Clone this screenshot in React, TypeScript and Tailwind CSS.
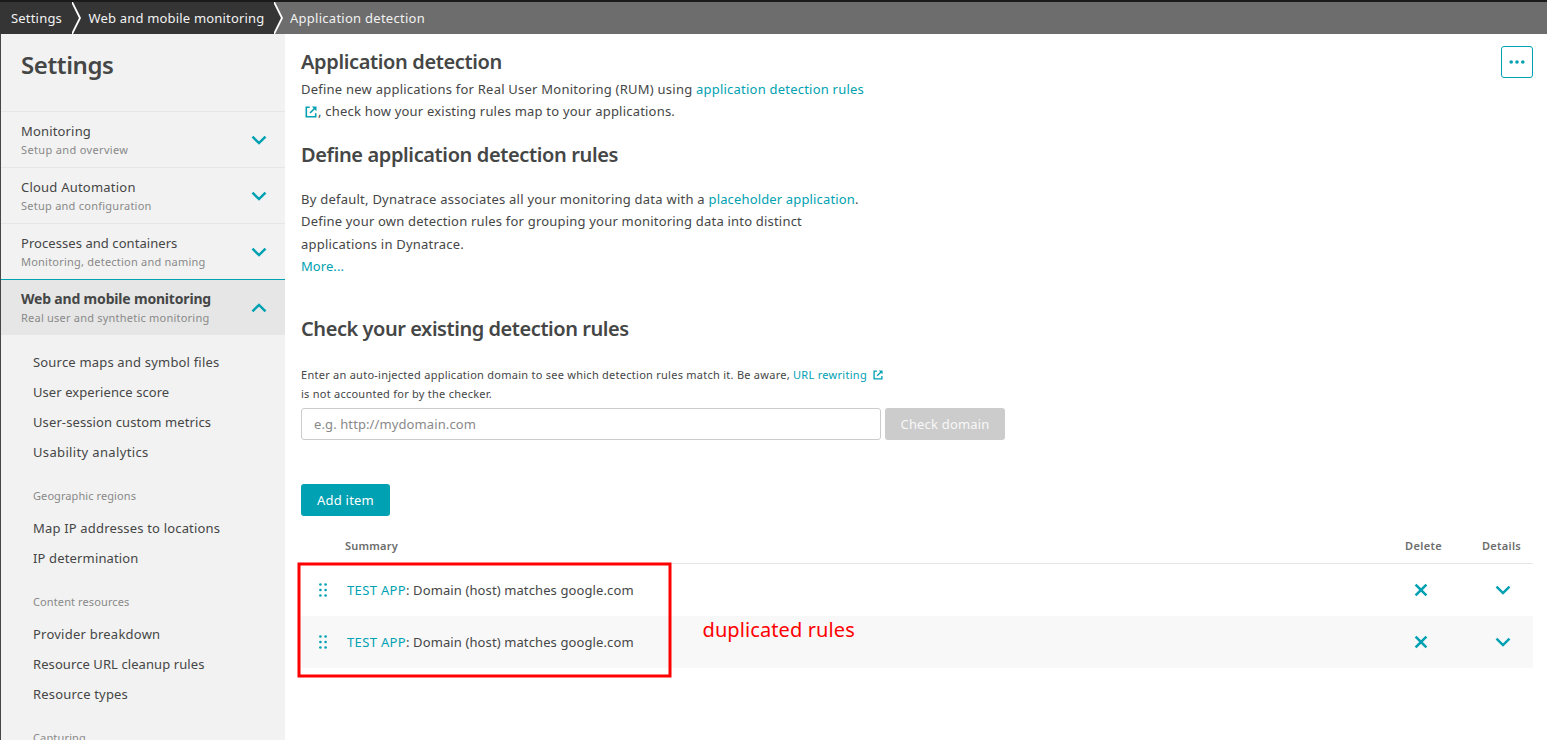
function Chevron({ up = false }: { up?: boolean }) {
  return (
    <svg width="16" height="10" viewBox="0 0 16 10" fill="none" stroke="#00a1b2" strokeWidth="2.5" className="shrink-0">
      <path d={up ? 'M1.500 8.300 8 1.900l6.500 6.400' : 'M1.500 1.700 8 8.100l6.500-6.400'} />
    </svg>
  );
}

function External({ size, className = '' }: { size: number; className?: string }) {
  return (
    <svg width={size} height={size} viewBox="0 0 12 12" fill="none" stroke="#00a1b2" strokeWidth="1.6" className={`inline-block shrink-0 ${className}`}>
      <path d="M4.700 1.300H1.300v9.400h9.400V7.300" />
      <path d="M5 7 10 2" />
      <path d="M6.800 0.500H11.500V5.200z" fill="#00a1b2" stroke="none" />
    </svg>
  );
}

const groups = [
  { t: 'Monitoring', c: 'tracking-[0.164px]', s: 'Setup and overview', sc: 'tracking-[0.35px]' },
  { t: 'Cloud Automation', c: 'tracking-[0.22px]', s: 'Setup and configuration', sc: 'tracking-[0.25px]' },
  { t: 'Processes and containers', c: 'tracking-[0.06px]', s: 'Monitoring, detection and naming', sc: 'tracking-[0.22px]' },
];

const sub: { h?: boolean; t: string; c: string }[] = [
  { t: 'Source maps and symbol files', c: 'tracking-[0.185px]' },
  { t: 'User experience score', c: 'tracking-[0.065px]' },
  { t: 'User-session custom metrics', c: 'tracking-[0.11px]' },
  { t: 'Usability analytics', c: 'tracking-[0.35px]' },
  { h: true, t: 'Geographic regions', c: 'tracking-[0.082px]' },
  { t: 'Map IP addresses to locations', c: 'tracking-[0.175px]' },
  { t: 'IP determination', c: 'tracking-[0.15px]' },
  { h: true, t: 'Content resources', c: 'tracking-[0.11px]' },
  { t: 'Provider breakdown', c: 'tracking-[0.235px]' },
  { t: 'Resource URL cleanup rules', c: 'tracking-[0.08px]' },
  { t: 'Resource types', c: 'tracking-[0.18px]' },
  { h: true, t: 'Capturing', c: 'tracking-[0.155px]' },
];

function Row({ alt = false }: { alt?: boolean }) {
  return (
    <div className={`flex h-[52px] items-center ${alt ? 'bg-[#f8f8f8]' : ''}`}>
      <svg width="12" height="14" viewBox="0 0 12 14" fill="#00a1b2" className="ml-4">
        {[3.4, 8.6].flatMap((x) => [1.5, 7, 12.5].map((y) => <circle key={`${x}-${y}`} cx={x} cy={y} r="1.300" />))}
      </svg>
      <div className="ml-[18px] flex-1 pt-0.5">
        <span className="tracking-[0.344px] text-[#00a1b2]">TEST APP</span>
        <span className="tracking-[0.11px]">: Domain (host) matches google.com</span>
      </div>
      <svg width="14" height="14" viewBox="0 0 14 14" stroke="#00a1b2" strokeWidth="2.600" className="mr-[67px]">
        <path d="M1.600 1.600l10.800 10.800M12.400 1.600l-10.800 10.800" />
      </svg>
      <div className="mr-[22px] flex"><Chevron /></div>
    </div>
  );
}

export default function App() {
  return (
    <div className="flex h-[740px] w-[1547px] flex-col overflow-hidden whitespace-nowrap bg-white font-['Noto_Sans',sans-serif] text-[13px] text-[#454646]">
      <header className="flex h-[34px] shrink-0 border-t-2 border-[#1a1a1a] bg-[#6d6d6d] text-[#f2f2f2]">
        <div className="flex w-[72px] items-center bg-[#353535] pl-[11px] pt-px"><span className="tracking-[0.191px]">Settings</span></div>
        <svg width="10" height="32" viewBox="0 0 10 32" className="bg-[#353535]"><path d="M0 0l8 16-8 16" fill="none" stroke="#fff" strokeWidth="1.800" /></svg>
        <div className="flex w-[192px] items-center bg-[#353535] pl-[6.5px] pt-px"><span className="tracking-[0.184px]">Web and mobile monitoring</span></div>
        <svg width="10" height="32" viewBox="0 0 10 32"><path d="M0 0l8 16-8 16" fill="#353535" stroke="#fff" strokeWidth="1.800" /></svg>
        <div className="flex items-center pl-1.5 pt-px"><span className="tracking-[0.266px]">Application detection</span></div>
      </header>
      <div className="flex min-h-0 flex-1">
        <aside className="w-[285px] shrink-0 overflow-hidden border-l border-[#454646] bg-[#f2f2f2]">
          <div className="flex h-[77px] items-start pl-5 pt-[15px] text-2xl font-semibold"><span className="tracking-[-0.4px]">Settings</span></div>
          {groups.map((g) => (
            <div key={g.t} className="flex h-14 items-center justify-between border-t border-[#e6e6e6] pl-5 pr-[18px]">
              <div>
                <div className="h-5 pt-px leading-[19px]"><span className={g.c}>{g.t}</span></div>
                <div className="h-[18px] text-[11px] leading-[18px] text-[#898989]"><span className={g.sc}>{g.s}</span></div>
              </div>
              <Chevron />
            </div>
          ))}
          <div className="flex h-14 items-center justify-between border-t border-[#00a1b2] bg-[#e6e6e6] pl-5 pr-[18px]">
            <div>
              <div className="h-[19px] text-sm leading-[19px] font-bold"><span className="tracking-[-0.184px]">Web and mobile monitoring</span></div>
              <div className="h-[19px] text-[11px] leading-[19px] text-[#898989]"><span className="tracking-[0.22px]">Real user and synthetic monitoring</span></div>
            </div>
            <Chevron up />
          </div>
          <div className="pl-8 pt-3">
            {sub.map((s) =>
              s.h ? (
                <div key={s.t} className="h-[46px] pt-5 text-[11px] leading-[18px] text-[#898989]"><span className={s.c}>{s.t}</span></div>
              ) : (
                <div key={s.t} className="h-[30px] leading-[30px]"><span className={s.c}>{s.t}</span></div>
              ),
            )}
          </div>
        </aside>
        <main className="min-w-0 flex-1 pl-4 pr-[14px]">
          <div className="flex justify-between">
            <div className="pt-[14px]">
              <h1 className="h-[30px] text-xl leading-7 font-semibold tracking-[-0.362px]">Application detection</h1>
              <p className="leading-[22px] tracking-[0.232px]">
                Define new applications for Real User Monitoring (RUM) using <span className="tracking-[0.219px] text-[#00a1b2]">application detection rules</span>
              </p>
              <div className="flex items-center pl-1 leading-[22px]"><External size={12} className="mt-px" /><span className="ml-px tracking-[0.203px]">, check how your existing rules map to your applications.</span></div>
            </div>
            <button className="mt-3 flex size-8 items-center justify-center rounded-[3px] border border-[#00a1b2]">
              <svg width="16" height="4" viewBox="0 0 16 4" fill="#00a1b2"><circle cx="2.200" cy="2" r="1.800" /><circle cx="8" cy="2" r="1.800" /><circle cx="13.800" cy="2" r="1.800" /></svg>
            </button>
          </div>
          <h2 className="mt-[19px] h-7 text-xl leading-7 font-semibold tracking-[-0.376px]">Define application detection rules</h2>
          <div className="mt-[19px] leading-[22.4px]">
            <div className="tracking-[0.24px]">By default, Dynatrace associates all your monitoring data with a <span className="tracking-[0.15px] text-[#00a1b2]">placeholder application</span>.</div>
            <div className="tracking-[0.198px]">Define your own detection rules for grouping your monitoring data into distinct</div>
            <div className="tracking-[0.213px]">applications in Dynatrace.</div>
            <div className="tracking-[0.063px] text-[#00a1b2]">More...</div>
          </div>
          <h2 className="mt-[37px] h-7 text-xl leading-7 font-semibold tracking-[-0.445px]">Check your existing detection rules</h2>
          <div className="mt-[22px] text-[11px] leading-[19px]">
            <div className="flex items-center">
              <span className="whitespace-pre tracking-[0.26px]">Enter an auto-injected application domain to see which detection rules match it. Be aware, </span>
              <span className="mr-1.5 tracking-[0.291px] text-[#00a1b2]">URL rewriting</span>
              <External size={10} className="mt-0.5" />
            </div>
            <div className="tracking-[0.247px]">is not accounted for by the checker.</div>
          </div>
          <div className="mt-[5px] flex gap-1">
            <div className="flex h-8 w-[580px] items-center rounded-[3px] border border-[#ccc] pl-3 pt-0.5 tracking-[0.105px] text-[#898989]">e.g. http://mydomain.com</div>
            <button className="flex h-8 w-[120px] items-center justify-center rounded-[3px] bg-[#ccc] pt-0.5 tracking-[0.18px] text-[#f8f8f8]">Check domain</button>
          </div>
          <button className="mt-11 flex h-8 w-[89px] items-center justify-center rounded-[3px] bg-[#00a1b2] pt-0.5 tracking-[0.223px] text-white">Add item</button>
          <div className="relative mt-3">
            <div className="flex h-9 items-center border-b border-[#e6e6e6] pl-11 pt-0.5 text-[11px] font-semibold text-[#6d6d6d]">
              <div className="flex-1 tracking-[0.223px]">Summary</div>
              <div className="mr-10 tracking-[0.344px]">Delete</div>
              <div className="mr-3 tracking-[0.279px]">Details</div>
            </div>
            <Row />
            <Row alt />
            <svg className="absolute -left-1 top-[34px]" width="376" height="117" viewBox="0 0 376 117">
              <rect x="2" y="2" width="371" height="112" fill="none" stroke="#f00" strokeWidth="3" />
            </svg>
            <div className="absolute left-[401.5px] top-[88px] text-xl leading-7 tracking-[0.1px] text-[#f00]">duplicated rules</div>
          </div>
        </main>
      </div>
    </div>
  );
}
